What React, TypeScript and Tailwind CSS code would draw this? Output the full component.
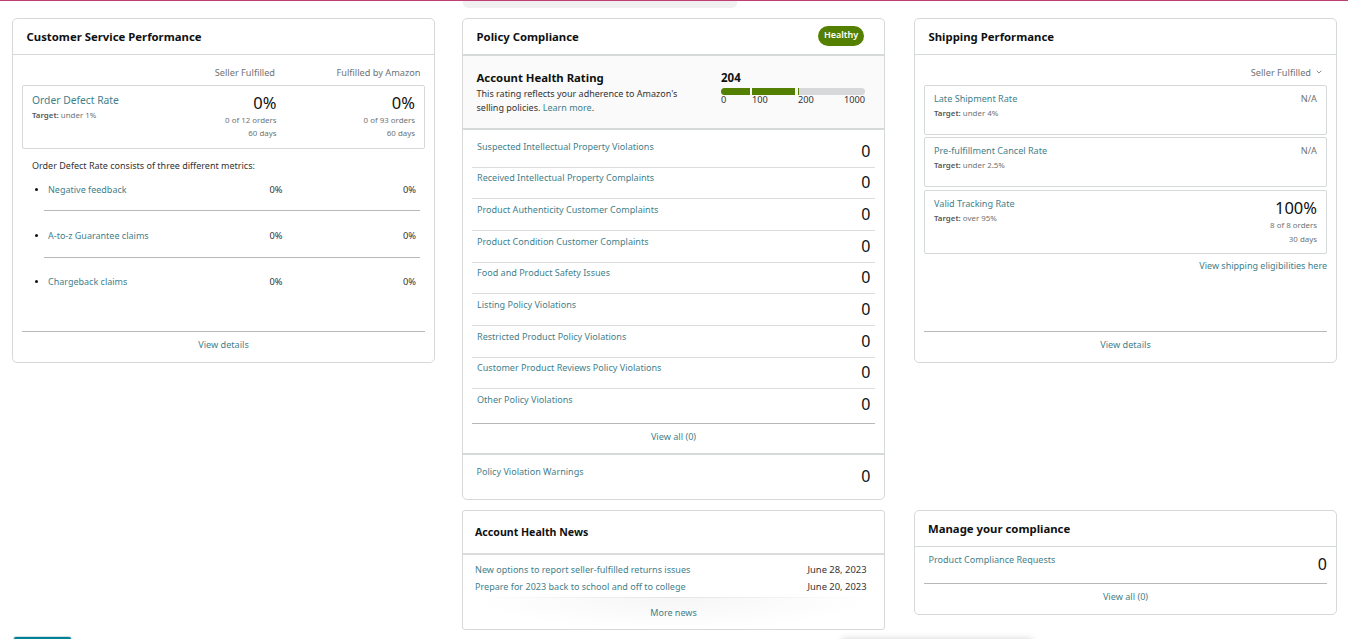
import type { ReactNode } from 'react';
import clsx from 'clsx';

const POLICY_ROWS = [
  'Suspected Intellectual Property Violations',
  'Received Intellectual Property Complaints',
  'Product Authenticity Customer Complaints',
  'Product Condition Customer Complaints',
  'Food and Product Safety Issues',
  'Listing Policy Violations',
  'Restricted Product Policy Violations',
  'Customer Product Reviews Policy Violations',
  'Other Policy Violations',
];

const DEFECT_METRICS = ['Negative feedback', 'A-to-z Guarantee claims', 'Chargeback claims'];

const NEWS = [
  { title: 'New options to report seller-fulfilled returns issues', date: 'June 28, 2023' },
  { title: 'Prepare for 2023 back to school and off to college', date: 'June 20, 2023' },
];

function Card({ className, children }: { className?: string; children: ReactNode }) {
  return (
    <section className={clsx('flex w-[423px] flex-col border border-[#d5d9d9] bg-white', className)}>
      {children}
    </section>
  );
}

function CardTitle({ children }: { children: ReactNode }) {
  return <h2 className="text-[11.35px] leading-4 font-bold text-[#0f1111]">{children}</h2>;
}

function Link({ className, children }: { className?: string; children: ReactNode }) {
  return <a className={clsx('text-[#3f7f8c]', className)}>{children}</a>;
}

function Target({ value }: { value: string }) {
  return (
    <div className="text-[7.9px] leading-3 text-[#6f7373]">
      <span className="font-semibold text-[#565959]">Target:</span> {value}
    </div>
  );
}

function CountRow({ label, className }: { label: string; className?: string }) {
  return (
    <div className={clsx('flex justify-between', className)}>
      <Link className="text-[9.06px] leading-5">{label}</Link>
      <span className="pt-1 text-base leading-5 text-[#0f1111]">0</span>
    </div>
  );
}

function CardFooter({ className = 'h-[31px]', children }: { className?: string; children: ReactNode }) {
  return (
    <div className={clsx('mx-[9px] mt-auto flex justify-center border-t border-[#b7b9b9] pt-[3px]', className)}>
      <Link className="text-[9.15px] leading-5">{children}</Link>
    </div>
  );
}

function OrderStat({ total, className }: { total: string; className?: string }) {
  return (
    <div className={clsx('pt-[7px] text-right text-[7.9px] leading-[13px] text-[#6f7373]', className)}>
      <div className="text-[16.5px] leading-5 text-[#0f1111]">0%</div>
      <div className="mt-px">{total}</div>
      <div>60 days</div>
    </div>
  );
}

function CustomerServiceCard() {
  return (
    <Card className="h-[345px] rounded-[5px]">
      <div className="flex h-9 items-center border-b border-[#d5d9d9] px-[13.5px]">
        <CardTitle>Customer Service Performance</CardTitle>
      </div>
      <div className="flex h-[30px] justify-end pt-2 pr-[13.5px] text-[9.2px] leading-5 text-[#6f7373]">
        <span>Seller Fulfilled</span>
        <span className="w-[145.5px] text-right">Fulfilled by Amazon</span>
      </div>
      <div className="mx-[9px] flex h-16 rounded-[2px] border border-[#d5d9d9] px-[9px]">
        <div className="flex-1 pt-[5px]">
          <Link className="block text-[10.3px] leading-[18px]">Order Defect Rate</Link>
          <Target value="under 1%" />
        </div>
        <OrderStat total="0 of 12 orders" />
        <OrderStat total="0 of 93 orders" className="w-[138.5px]" />
      </div>
      <p className="pt-[7px] pl-[19px] leading-5 text-[#333]">
        Order Defect Rate consists of three different metrics:
      </p>
      <ul className="mr-[14px] ml-[31px]">
        {DEFECT_METRICS.map((metric, i) => (
          <li
            key={metric}
            className={clsx(
              'relative flex pl-1 leading-5 before:absolute before:-left-[9px] before:size-[3px] before:rounded-full before:bg-[#0f1111]',
              i === 0 && 'h-[35px] pt-1 before:top-[12px]',
              i === 1 && 'h-[47px] pt-[15px] before:top-[23px]',
              i === 2 && 'h-[46px] pt-[14px] before:top-[22px]',
              i < 2 && 'border-b border-[#b7b9b9]',
            )}
          >
            <Link className="flex-1">{metric}</Link>
            <span className="text-[9.3px] text-[#333]">0%</span>
            <span className="w-[137.5px] pr-1 text-right text-[9.3px] text-[#333]">0%</span>
          </li>
        ))}
      </ul>
      <CardFooter>View details</CardFooter>
    </Card>
  );
}

function HealthBar() {
  return (
    <div className="w-36">
      <div className="text-[11.5px] leading-4 font-bold text-[#0f1111]">204</div>
      <div className="mt-[2px] flex h-[7px] overflow-hidden rounded-full">
        <div className="w-[29px] bg-[#538000]" />
        <div className="ml-[2px] w-[43px] bg-[#538000]" />
        <div className="ml-[3px] w-px bg-[#538000]" />
        <div className="flex-1 bg-[#d5d9d9]" />
      </div>
      <div className="flex text-[9.2px] leading-[10px] text-[#333]">
        <span className="w-[31px]">0</span>
        <span className="w-[46px]">100</span>
        <span>200</span>
        <span className="ml-auto">1000</span>
      </div>
    </div>
  );
}

function PolicyCard() {
  return (
    <Card className="h-[482px] rounded-[5px]">
      <div className="flex h-[37px] items-start justify-between border-b-2 border-[#d5d9d9] pr-5 pl-[13.5px]">
        <div className="pt-[10px]">
          <CardTitle>Policy Compliance</CardTitle>
        </div>
        <span className="mt-[7px] flex h-5 w-[46px] justify-center rounded-full bg-[#538000] text-[9px] leading-[18px] font-semibold text-white">
          Healthy
        </span>
      </div>
      <div className="flex h-[74px] justify-between border-b-2 border-[#d5d9d9] bg-[#fafafa] pt-[14px] pr-[19px] pl-[13.5px]">
        <div>
          <CardTitle>Account Health Rating</CardTitle>
          <div className="pt-[1px] leading-[14px] text-[#333]">
            <p>This rating reflects your adherence to Amazon's</p>
            <p className="flex">
              <span>selling policies.&nbsp;</span>
              <Link>Learn more</Link>
              <span>.</span>
            </p>
          </div>
        </div>
        <HealthBar />
      </div>
      <div className="mx-[9px]">
        {POLICY_ROWS.map((label, i) => (
          <CountRow
            key={label}
            label={label}
            className={clsx(
              'pr-[4.5px] pl-[5px]',
              i === 0 ? 'h-[37.5px] pt-[6.5px]' : 'h-[31.7px] pt-[0.7px]',
              i < POLICY_ROWS.length - 1 && 'border-b border-[#dcdede]',
            )}
          />
        ))}
      </div>
      <CardFooter className="h-[30px]">View all (0)</CardFooter>
      <CountRow label="Policy Violation Warnings" className="h-[46px] border-t-2 border-[#d5d9d9] px-[13.5px] pt-[7px]" />
    </Card>
  );
}

function NewsCard() {
  return (
    <Card className="mt-[10px] h-[120px] rounded-[3px]">
      <div className="flex h-11 items-center border-b-2 border-[#dcdcdc] px-3">
        <h2 className="text-[10.6px] leading-4 font-bold text-[#0f1111]">Account Health News</h2>
      </div>
      <ul className="h-[42px] pt-[6px] pr-[17.5px] pl-3">
        {NEWS.map((item) => (
          <li key={item.title} className="flex justify-between text-[9.05px] leading-[17px]">
            <Link>{item.title}</Link>
            <span className="text-[9.4px] text-[#333]">{item.date}</span>
          </li>
        ))}
      </ul>
      <div className="mx-3 h-px bg-linear-to-r from-white via-[#e4e4e4] to-white" />
      <div className="mx-3 flex flex-1 justify-center bg-[radial-gradient(ellipse_50%_100%_at_50%_0%,#f6f6f6,#ffffff)] pt-[5px]">
        <Link className="leading-5">More news</Link>
      </div>
    </Card>
  );
}

function ShippingMetric({ name, target, className, children }: {
  name: string;
  target: string;
  className: string;
  children: ReactNode;
}) {
  return (
    <div className={clsx('flex justify-between rounded-[2px] border border-[#d5d9d9] px-[9px]', className)}>
      <div className="pt-[5px]">
        <Link className="block text-[9.1px] leading-4">{name}</Link>
        <Target value={target} />
      </div>
      {children}
    </div>
  );
}

function ShippingCard() {
  return (
    <Card className="h-[345px] rounded-[5px]">
      <div className="flex h-9 items-center border-b border-[#d5d9d9] px-[13.5px]">
        <CardTitle>Shipping Performance</CardTitle>
      </div>
      <div className="flex h-[30px] justify-end pt-2 pr-[14px] text-[9.2px] leading-5 text-[#6f7373]">
        Seller Fulfilled
        <svg viewBox="0 0 6 4" className="mt-[7px] ml-[5px] h-1 w-[6px]" fill="none" stroke="#6f7373" strokeWidth="0.8">
          <path d="M0.7 0.7 L3 3 L5.3 0.7" />
        </svg>
      </div>
      <div className="mx-[9px]">
        <ShippingMetric name="Late Shipment Rate" target="under 4%" className="h-[50px]">
          <span className="pt-[5px] text-[9.2px] leading-4 text-[#6f7373]">N/A</span>
        </ShippingMetric>
        <ShippingMetric name="Pre-fulfillment Cancel Rate" target="under 2.5%" className="mt-[2px] h-[50px]">
          <span className="pt-[5px] text-[9.2px] leading-4 text-[#6f7373]">N/A</span>
        </ShippingMetric>
        <ShippingMetric name="Valid Tracking Rate" target="over 95%" className="mt-[3px] h-16">
          <div className="pt-[7px] text-right text-[7.9px] leading-[13.5px] text-[#6f7373]">
            <div className="text-[16.5px] leading-5 text-[#0f1111]">100%</div>
            <div className="mt-px">8 of 8 orders</div>
            <div>30 days</div>
          </div>
        </ShippingMetric>
        <div className="pt-[2px] text-right leading-5">
          <Link>View shipping eligibilities here</Link>
        </div>
      </div>
      <CardFooter>View details</CardFooter>
    </Card>
  );
}

function ComplianceCard() {
  return (
    <Card className="mt-[147px] h-[105px] rounded-[5px]">
      <div className="flex h-9 items-center border-b border-[#d5d9d9] px-[13px]">
        <CardTitle>Manage your compliance</CardTitle>
      </div>
      <CountRow label="Product Compliance Requests" className="pt-[3px] pr-[9px] pl-[13.5px]" />
      <CardFooter>View all (0)</CardFooter>
    </Card>
  );
}

export default function App() {
  return (
    <div
      className="relative h-[639px] w-[1348px] overflow-hidden border-t border-[#bd3f76] bg-white text-[9px]"
      style={{ fontFamily: '"Noto Sans", sans-serif' }}
    >
      <div className="ml-[463px] h-[7px] w-[274px] rounded-b-[5px] bg-[#f0f0f1]" />
      <main className="mt-[10px] ml-3 flex items-start">
        <CustomerServiceCard />
        <div className="ml-[27px]">
          <PolicyCard />
          <NewsCard />
        </div>
        <div className="ml-[29px]">
          <ShippingCard />
          <ComplianceCard />
        </div>
      </main>
      <div className="absolute -bottom-2 left-[14px] h-[10px] w-[57px] rounded-[2px] bg-[#008296] shadow-[0_0_0_1px_#cfe0e3]" />
      <div className="absolute -bottom-5 left-[842px] h-5 w-[190px] shadow-[0_0_7px_rgba(0,0,0,0.18)]" />
    </div>
  );
}
